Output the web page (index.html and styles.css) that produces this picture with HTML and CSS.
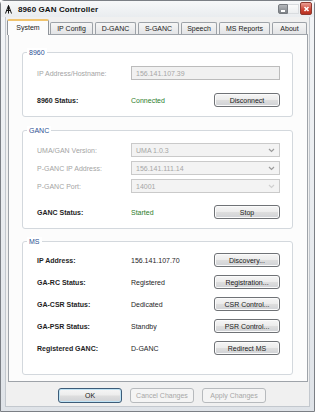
FILE: index.html
```html
<!DOCTYPE html>
<html>
<head>
<meta charset="utf-8">
<title>8960 GAN Controller</title>
<link rel="stylesheet" href="styles.css">
</head>
<body>
<div class="window">
  <div class="titlebar">
    <svg class="app-icon" width="7" height="9" viewBox="0 0 7 9">
      <path d="M3.5 0.5 L6.5 8.5 M3.5 0.5 L0.5 8.5 M1.6 5.5 H5.4 M3.5 0.5 V8.5" stroke="#111" stroke-width="1" fill="none"/>
    </svg>
    <span class="title">8960 GAN Controller</span>
    <div class="controls">
      <span class="ctl ctl-min"></span>
      <span class="ctl ctl-max"></span>
      <span class="ctl ctl-close">
        <svg width="11" height="12" viewBox="0 0 11 12"><path d="M3.5 4 L7.5 8 M7.5 4 L3.5 8" stroke="#fff" stroke-width="1.6"/></svg>
      </span>
    </div>
  </div>
  <div class="client">
    <div class="tabs">
      <div class="tab tab-active">System</div>
      <div class="tab">IP Config</div>
      <div class="tab">D-GANC</div>
      <div class="tab">S-GANC</div>
      <div class="tab">Speech</div>
      <div class="tab">MS Reports</div>
      <div class="tab tab-last">About</div>
    </div>
    <div class="panel">
      <div class="group group-8960">
        <div class="group-title">8960</div>
        <div class="row row-first">
          <span class="label label-disabled">IP Address/Hostname:</span>
          <span class="field field-disabled">156.141.107.39</span>
        </div>
        <div class="row row-status">
          <span class="label label-strong">8960 Status:</span>
          <span class="value value-ok">Connected</span>
          <span class="btn">Disconnect</span>
        </div>
      </div>

      <div class="group group-ganc">
        <div class="group-title">GANC</div>
        <div class="row row-first">
          <span class="label label-disabled">UMA/GAN Version:</span>
          <span class="field field-disabled field-combo">UMA 1.0.3<svg class="chev" width="7" height="5" viewBox="0 0 7 5"><path d="M1 1 L3.5 3.5 L6 1" stroke="#9c9c9c" stroke-width="1.2" fill="none"/></svg></span>
        </div>
        <div class="row row-tight">
          <span class="label label-disabled">P-GANC IP Address:</span>
          <span class="field field-disabled field-combo">156.141.111.14<svg class="chev" width="7" height="5" viewBox="0 0 7 5"><path d="M1 1 L3.5 3.5 L6 1" stroke="#9c9c9c" stroke-width="1.2" fill="none"/></svg></span>
        </div>
        <div class="row row-tight">
          <span class="label label-disabled">P-GANC Port:</span>
          <span class="field field-disabled field-combo">14001<svg class="chev chev-faint" width="7" height="5" viewBox="0 0 7 5"><path d="M1 1 L3.5 3.5 L6 1" stroke="#d0d0d0" stroke-width="1.2" fill="none"/></svg></span>
        </div>
        <div class="row row-status">
          <span class="label label-strong">GANC Status:</span>
          <span class="value value-ok">Started</span>
          <span class="btn">Stop</span>
        </div>
      </div>

      <div class="group group-ms">
        <div class="group-title">MS</div>
        <div class="row row-ms-first">
          <span class="label label-strong">IP Address:</span>
          <span class="value">156.141.107.70</span>
          <span class="btn">Discovery...</span>
        </div>
        <div class="row row-ms">
          <span class="label label-strong">GA-RC Status:</span>
          <span class="value">Registered</span>
          <span class="btn">Registration...</span>
        </div>
        <div class="row row-ms">
          <span class="label label-strong">GA-CSR Status:</span>
          <span class="value">Dedicated</span>
          <span class="btn">CSR Control...</span>
        </div>
        <div class="row row-ms">
          <span class="label label-strong">GA-PSR Status:</span>
          <span class="value">Standby</span>
          <span class="btn">PSR Control...</span>
        </div>
        <div class="row row-ms">
          <span class="label label-strong">Registered GANC:</span>
          <span class="value">D-GANC</span>
          <span class="btn">Redirect MS</span>
        </div>
      </div>
    </div>
    <div class="actions">
      <span class="btn btn-action btn-default">OK</span>
      <span class="btn btn-action btn-disabled">Cancel Changes</span>
      <span class="btn btn-action btn-disabled">Apply Changes</span>
    </div>
  </div>
</div>
</body>
</html>
```

FILE: styles.css
```css
* { box-sizing: border-box; }

html, body {
  margin: 0;
  padding: 0;
  background: #ffffff;
}

body {
  font-family: "Liberation Sans", Arial, sans-serif;
  font-size: 7px;
  color: #1a1a1a;
}

.window {
  width: 315px;
  height: 412px;
  border: 1px solid #7b7f85;
  border-radius: 4px 4px 0 0;
  background: linear-gradient(#f3f5f7, #dfe3e8);
  display: flex;
  flex-direction: column;
}

.titlebar {
  height: 16px;
  display: flex;
  align-items: center;
  padding-left: 4px;
  background: linear-gradient(#f7f8f9, #e9ecef);
}

.app-icon {
  display: block;
  margin-right: 6px;
}

.title {
  font-size: 8px;
  font-weight: bold;
  color: #111;
  letter-spacing: 0.1px;
}

.controls {
  margin-left: auto;
  margin-right: 2px;
  display: flex;
  align-items: flex-start;
  align-self: flex-start;
  padding-top: 1px;
}

.ctl {
  display: block;
  position: relative;
}

.ctl-min {
  width: 10px;
  height: 10px;
  margin-top: 2px;
  border-radius: 2px 0 0 2px;
  background: linear-gradient(#b4b7bb, #7d8186);
  border: 1px solid #777b80;
}

.ctl-min::after {
  content: "";
  position: absolute;
  left: 2px;
  top: 5px;
  width: 4px;
  height: 2px;
  background: #ffffff;
}

.ctl-max {
  width: 11px;
  height: 10px;
  margin-top: 2px;
  background: linear-gradient(#fbfbfb, #eceef0);
  border: 1px solid #d9dcdf;
  border-left: none;
}

.ctl-close {
  width: 12px;
  height: 13px;
  margin-left: 1px;
  border-radius: 2px;
  background: linear-gradient(#eb9f94, #cf4a3a 55%, #b8301f);
  border: 1px solid #8e3a30;
}

.ctl-close svg {
  display: block;
}

.client {
  flex: 1;
  margin: 0 4px 4px 4px;
  background: #f0f0f0;
  padding-top: 2px;
  border: 1px solid #c3c8ce;
  border-top: none;
}

.tabs {
  display: grid;
  grid-template-columns: 43px 45px 43px 43px 38px 53px 35px;
  align-items: end;
  height: 15px;
  margin-left: 1px;
}

.tab {
  height: 12px;
  margin-right: 2px;
  border: 1px solid #9da2a8;
  border-bottom: none;
  border-radius: 2px 2px 0 0;
  background: linear-gradient(#f6f6f6, #e3e4e6);
  color: #222;
  display: flex;
  align-items: center;
  justify-content: center;
  line-height: 9px;
  white-space: nowrap;
}

.tab-last {
  margin-right: 0;
}

.tab-active {
  height: 16px;
  margin-bottom: -1px;
  margin-right: 1px;
  position: relative;
  z-index: 1;
  background: #fcfcfc;
  border-color: #8f949a;
  border-top: 2px solid #f0c36d;
  padding-bottom: 2px;
}

.panel {
  width: 300px;
  margin-left: 2px;
  background: #fcfcfc;
  border: 1px solid #9ea3a9;
  padding: 17px 14px 6px 13px;
}

.group {
  width: 271px;
  border: 1px solid #d3d8dd;
  border-radius: 3px;
  background: #ffffff;
  padding: 0 12px 0 14px;
}

.group-8960 { padding-bottom: 9px; }
.group-ganc { margin-top: 13px; padding-bottom: 9px; }
.group-ms { margin-top: 12px; padding-bottom: 19px; }

.group-title {
  width: max-content;
  margin: -5px 0 0 -10px;
  padding: 0 2px;
  line-height: 9px;
  background: #ffffff;
  color: #2d4f93;
}

.row {
  display: grid;
  grid-template-columns: 94px 83px 66px;
  align-items: center;
  height: 14px;
  white-space: nowrap;
}

.row-first { margin-top: 9px; }
.group-ganc .row-first { margin-top: 8px; }
.row-tight { margin-top: 4px; }
.row-status { margin-top: 12px; }
.group-8960 .row-status { margin-top: 13px; }
.row-ms-first { margin-top: 7px; }
.row-ms { margin-top: 8px; }

.label-disabled {
  color: #a4a4a4;
}

.label-strong {
  font-weight: bold;
  color: #1e1e1e;
}

.value {
  color: #1e1e1e;
}

.value-ok {
  color: #2c7d2c;
}

.field {
  grid-column: 2 / span 2;
  height: 14px;
  border: 1px solid #bcbcbc;
  background: #f1f1f1;
  padding-left: 4px;
  display: flex;
  align-items: center;
}

.field-disabled {
  color: #a6a6a6;
}

.field-combo {
  border-color: #cacaca;
  background: #f3f3f3;
}

.chev {
  display: block;
  margin-left: auto;
  margin-right: 4px;
}

.btn {
  height: 14px;
  border: 1px solid #6f7276;
  border-radius: 3px;
  background: linear-gradient(#f6f6f6 0%, #ececec 48%, #dedede 52%, #d0d2d6 100%);
  box-shadow: inset 0 0 0 1px #fbfbfb;
  color: #1a1a1a;
  display: flex;
  align-items: center;
  justify-content: center;
  line-height: 9px;
}

.actions {
  display: flex;
  gap: 8px;
  padding-left: 52px;
  margin-top: 6px;
}

.btn-action {
  width: 64px;
  height: 15px;
}

.btn-default {
  border-color: #3d5c78;
  box-shadow: inset 0 0 0 1px #bfe3f5;
}

.btn-disabled {
  border-color: #b7babd;
  background: #f4f4f4;
  box-shadow: none;
  color: #a7a7a7;
}
```
